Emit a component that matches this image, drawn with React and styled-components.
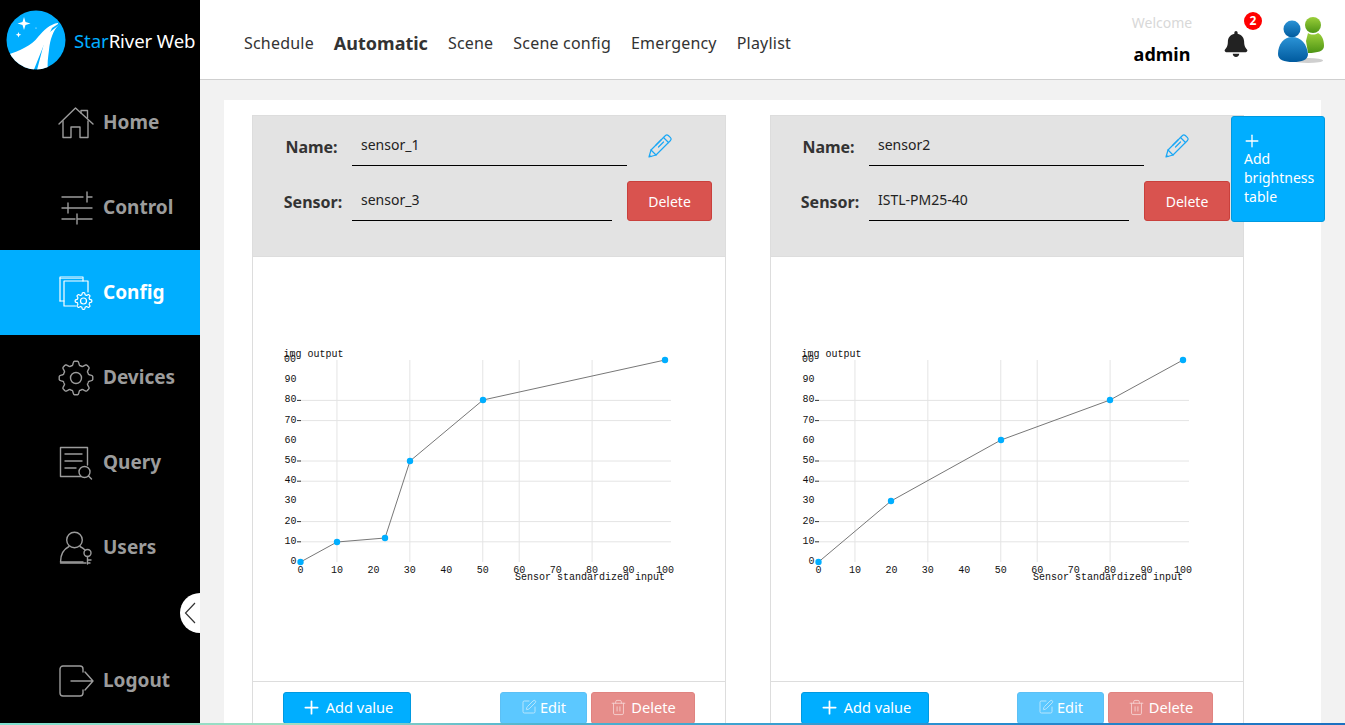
import React from "react";
import styled, { createGlobalStyle } from "styled-components";
import { Plus, SquarePen, Trash2 } from "lucide-react";
import { FaBell } from "react-icons/fa";

const FONT = `"Noto Sans", "Open Sans", Arial, sans-serif`;
const BLUE = "#00aeff";

const Global = createGlobalStyle`
  html, body { margin: 0; padding: 0; height: 100%; overflow: hidden; background: #f2f2f2; font-family: ${FONT}; }
  * { box-sizing: border-box; }
`;

const Page = styled.div`
  position: relative; width: 1345px; height: 725px; overflow: hidden;
  display: grid; grid-template-columns: 200px 1fr;
`;
const TaskEdge = styled.div`
  position: absolute; left: 0; right: 0; bottom: 0; height: 2px; z-index: 5;
  background: linear-gradient(90deg, #7fe0d0, #a0dcc0 22%, #4fb4d0 40%, #2a90d0 70%, #1c70c0 100%);
`;
const Sidebar = styled.aside`
  position: relative; background: #000; height: 723px; display: flex; flex-direction: column;
`;
const Brand = styled.div`
  height: 80px; display: flex; align-items: center; padding: 0 0 0 6px; flex: none;
`;
const BrandName = styled.div`
  margin-left: 8px; font-size: 18.6px; color: #fff; white-space: nowrap; letter-spacing: -0.1px;
  span { color: ${BLUE}; }
`;
const NavItem = styled.a`
  height: 85px; flex: none; display: flex; align-items: center; padding-left: 58px;
  background: ${(p) => (p.$active ? BLUE : "transparent")};
  color: ${(p) => (p.$active ? "#fff" : "#9c9c9c")};
  font-size: 19px; font-weight: 700;
  ${(p) => p.$bottom && "margin-top: auto;"}
`;
const NavLabel = styled.span`
  position: relative; top: -1px;
`;
const NavIcon = styled.span`
  width: 36px; height: 36px; margin-right: 9px; display: flex; align-items: center; justify-content: center; flex: none;
  svg { display: block; flex: none; }
`;
const Collapse = styled.div`
  position: absolute; right: 0; top: 593px; width: 20px; height: 40px; background: #fff;
  border-radius: 20px 0 0 20px; display: flex; align-items: center; justify-content: center;
`;
const Main = styled.main`
  display: flex; flex-direction: column; min-width: 0; height: 725px;
`;
const Header = styled.header`
  height: 80px; flex: none; background: #fff; border-bottom: 1px solid #cfcfcf;
  display: flex; align-items: center; padding: 0 19px 0 44px;
`;
const TopNav = styled.nav`
  display: flex; align-items: center; gap: 20px; padding-top: 7px;
`;
const TopLink = styled.a`
  font-size: ${(p) => (p.$active ? "18px" : "16px")};
  font-weight: ${(p) => (p.$active ? 700 : 400)};
  letter-spacing: ${(p) => (p.$active ? "0" : "0.2px")};
  color: #333; white-space: nowrap;
`;
const UserBox = styled.div`
  margin-left: auto; display: flex; align-items: center;
`;
const Welcome = styled.div`
  width: 64px; text-align: center; display: flex; flex-direction: column; align-items: center; gap: 9px; margin-right: 30px; padding-top: 1px;
`;
const WelcomeText = styled.div`
  font-size: 14px; line-height: 20px; color: #d8d8d8;
`;
const AdminName = styled.div`
  font-size: 18px; line-height: 25px; font-weight: 700; color: #000;
`;
const BellWrap = styled.div`
  position: relative; width: 24px; height: 30px; margin: 8px 30px 0 0; color: #222;
  svg { display: block; margin: 2px 0 0 -1px; }
`;
const Badge = styled.span`
  position: absolute; left: 20px; top: -17px; width: 18px; height: 18px; border-radius: 50%;
  background: #f00; color: #fff; font-size: 12px; font-weight: 700; line-height: 18px; text-align: center;
`;
const Content = styled.div`
  flex: 1; min-height: 0; padding: 20px 24px 0; overflow: hidden;
`;
const Panel = styled.div`
  position: relative; background: #fff; height: 100%; padding: 15px 28px 0;
  display: flex; gap: 44px; align-items: flex-start;
`;
const Card = styled.section`
  width: 474px; flex: none; height: 640px; border: 1px solid #ddd; background: #fff;
`;
const CardHead = styled.div`
  height: 141px; background: #e3e3e3; border-bottom: 1px solid #ddd; padding: 10px 0 0 ${(p) => p.$pad}px;
  display: flex; flex-direction: column; gap: 15px;
`;
const Row = styled.div`
  display: flex; align-items: center; height: 40px;
`;
const FieldLabel = styled.label`
  width: ${(p) => p.$w}px; margin-right: ${(p) => 69 - p.$w}px; flex: none; text-align: center;
  font-size: 16px; font-weight: 700; color: #333; white-space: nowrap; position: relative; top: 1px;
`;
const FieldInput = styled.input`
  width: ${(p) => p.$w}px; height: 40px; flex: none; border: 0; border-bottom: 1px solid #000; background: transparent; outline: none;
  font-family: ${FONT}; font-size: 14px; color: #222; padding: 0 0 3px 9px;
`;
const PenButton = styled.span`
  margin-left: 21px; margin-top: -2px; width: 25px; height: 25px; display: block;
`;
const DeleteBtn = styled.button`
  margin-left: 15px; width: ${(p) => p.$w}px; height: 40px; border: 1px solid #c9403c; border-radius: 3px;
  background: #d9534f; color: #fff; font-family: ${FONT}; font-size: 14px; padding: 0;
`;
const Plot = styled.div`
  height: 424px; display: block; svg { display: block; }
`;
const Foot = styled.div`
  border-top: 1px solid #ddd; display: flex; align-items: flex-start; padding: 10px 30px 0;
`;
const ActionBtn = styled.button`
  height: 32px; width: ${(p) => p.$w}px; margin-left: ${(p) => p.$ml || 0}px;
  border: 1px solid ${(p) => p.$border}; border-radius: 3px; background: ${(p) => p.$bg};
  color: #fff; font-family: ${FONT}; font-size: 14.6px; padding: 0 0 2px;
  display: inline-flex; align-items: center; justify-content: center; gap: ${(p) => p.$gap || 4}px;
`;
const AddTable = styled.button`
  position: absolute; left: 1007px; top: 16px; width: 94px; height: 106px; z-index: 2;
  background: ${BLUE}; border: 1px solid #0099e0; border-radius: 3px; color: #fff;
  font-family: ${FONT}; font-size: 14px; line-height: 19px; text-align: left; padding: 14px 0 0 12px;
  display: flex; flex-direction: column; align-items: flex-start; justify-content: flex-start;
  svg { display: block; margin: 0 0 -2px -2px; flex: none; }
`;

const S = { fill: "none", stroke: "#9c9c9c", strokeWidth: 1.4, strokeLinecap: "round", strokeLinejoin: "round" };
const W = { ...S, stroke: "#fff", strokeWidth: 1.2 };

/* closed gear outline: `teeth` rounded lobes around (cx, cy) */
const gearPath = (cx, cy, rOuter, rInner, teeth) => {
  const pts = [];
  const n = teeth * 16;
  for (let i = 0; i < n; i++) {
    const a = (i / n) * Math.PI * 2;
    const w = Math.max(-1, Math.min(1, Math.cos(a * teeth) * 1.9));
    const r = (rOuter + rInner) / 2 + ((rOuter - rInner) / 2) * w;
    pts.push(`${(cx + r * Math.cos(a)).toFixed(2)} ${(cy + r * Math.sin(a)).toFixed(2)}`);
  }
  return `M${pts.join("L")}Z`;
};

const HomeIcon = () => (
  <svg width="36" height="32" viewBox="0 0 36 32" {...S}>
    <path d="M1 17 17.500 1 35 17" />
    <path d="M23 6V3.500h6.500V11" />
    <path d="M5 14V30.500h8V20h9v10.500h8V14" />
  </svg>
);
const ControlIcon = () => (
  <svg width="33" height="34" viewBox="0 0 33 34" {...S}>
    <path d="M2 6h21M27 1v10M27 6h5M2 17h6M8 12v10M8 17h24M2 28h13M17 23v10M17 28h15" />
  </svg>
);
const ConfigIcon = () => (
  <svg width="34" height="34" viewBox="0 0 34 34" {...W}>
    <path d="M1 25V1H24V5" />
    <path d="M1 2.500H23" strokeOpacity=".6" />
    <path d="M1 25H5" />
    <path d="M16.500 30H5V5H29V16" />
    <path d={gearPath(24.5, 25, 8.3, 6.3, 8)} />
    <circle cx="24.500" cy="25" r="3" />
  </svg>
);
const DevicesIcon = () => (
  <svg width="36" height="36" viewBox="0 0 36 36" {...S}>
    <path d={gearPath(18, 18, 16.8, 13, 8)} />
    <circle cx="18" cy="18" r="5.500" />
  </svg>
);
const QueryIcon = () => (
  <svg width="34" height="34" viewBox="0 0 34 34" {...S}>
    <path d="M22 30.500H1.500V1.500h27V19" />
    <path d="M6 8h17M6 15h17M6 22h11" />
    <circle cx="25.500" cy="26" r="5.500" />
    <path d="M29.500 30l3 3" />
  </svg>
);
const UsersIcon = () => (
  <svg width="34" height="34" viewBox="0 0 34 34" {...S}>
    <circle cx="15.500" cy="9" r="7.800" />
    <path d="M10 15.500C5 18 1.500 23.500 1.500 31H24" />
    <path d="M1.500 32H27" />
    <path d="M21 15.500c2 1 3.500 2 5 3.500" />
    <circle cx="28.500" cy="22" r="3.500" />
    <path d="M28.500 25.500V33M28.500 29H32M28.500 32h2.500" />
  </svg>
);
const LogoutIcon = () => (
  <svg width="35" height="32" viewBox="0 0 35 32" {...S}>
    <path d="M24 7V4a3 3 0 0 0-3-3H4a3 3 0 0 0-3 3v24a3 3 0 0 0 3 3h17a3 3 0 0 0 3-3v-3" />
    <path d="M12 16h22M26 7l8 9-8 9" />
  </svg>
);

const Logo = () => (
  <svg width="60" height="60" viewBox="0 0 60 60">
    <defs><clipPath id="lg"><circle cx="30" cy="30" r="29.500" /></clipPath></defs>
    <circle cx="30" cy="30" r="29.500" fill={BLUE} />
    <g clipPath="url(#lg)" fill="#fff">
      <path d="M52 13C44 14 38 20 32 27 26 35 14 41 0 45V62H27L37 37 46 18 52 14Z" />
      <path d="M53 15C47 20 44 30 43 40 42 48 41 54 42 60H31L37 37 40 25Z" />
    </g>
    <path d="M18 7l1.500 5 5 1.500-5 1.500L18 20l-1.500-5-5-1.500 5-1.500z" fill="#fff" />
    <path d="M12.500 22l.8 2 2 .8-2 .8-.8 2-.8-2-2-.8 2-.8z" fill="#fff" />
    <circle cx="30" cy="18" r=".6" fill="#fff" />
  </svg>
);

const PenIcon = () => (
  <svg width="25" height="25" viewBox="0 0 25 25" fill="none" stroke="#1aa7f5" strokeWidth="1.2" strokeLinejoin="round" strokeLinecap="round">
    <path d="M1 24l2-7L17.500 2.500a2 2 0 0 1 2.800 0l2.200 2.200a2 2 0 0 1 0 2.800L8 22z" />
    <path d="M3 17l5 5M1.500 22.500l1.500 1" />
    <path d="M15.500 4.500l5 5M8 12l5-5M10.500 14l5-5" />
  </svg>
);

const Avatar = () => (
  <svg width="48" height="48" viewBox="0 0 48 48">
    <defs>
      <linearGradient id="av1" x1="0" y1="0" x2="0" y2="1"><stop offset="0" stopColor="#2b93d6" /><stop offset="1" stopColor="#005a9e" /></linearGradient>
      <linearGradient id="av2" x1="0" y1="0" x2="0" y2="1"><stop offset="0" stopColor="#9bcf3a" /><stop offset="1" stopColor="#4d9414" /></linearGradient>
    </defs>
    <ellipse cx="30" cy="44.500" rx="15" ry="2.500" fill="#cfcfcf" />
    <circle cx="35" cy="9" r="8" fill="url(#av2)" />
    <path d="M30 17C33 19 37 19 40 17 44 19 46 24 46 30 46 35 40 37 30 37L28 25Z" fill="url(#av2)" />
    <circle cx="14" cy="13" r="8.500" fill="url(#av1)" />
    <path d="M0 38C0 28 6 21 14 21 23 21 29 28 30 38 30 44 24 46 15 46 6 46 0 44 0 38Z" fill="url(#av1)" />
  </svg>
);

const xOf = (v) => 300.5 + v * 3.645;
const yOf = (v) => 562 - v * 2.02;
const Y_GRID = [80, 70, 50, 40, 20, 10];
const X_GRID = [10, 30, 50, 60, 80];
const AxisText = styled.text`
  font-family: "Liberation Mono", monospace; font-size: 10px; fill: #111;
`;

const Chart = ({ points }) => (
  <svg width="472" height="424" viewBox="253 257 472 424">
    {X_GRID.map((v) => (
      <line key={v} x1={xOf(v)} x2={xOf(v)} y1="360" y2="562" stroke="#e4e4e4" />
    ))}
    {Y_GRID.map((v) => (
      <g key={v}>
        <line x1="300" x2="671" y1={yOf(v)} y2={yOf(v)} stroke="#e4e4e4" />
        <line x1="297" x2="301" y1={yOf(v)} y2={yOf(v)} stroke="#333" />
      </g>
    ))}
    {[0, 10, 20, 30, 40, 50, 60, 70, 80, 90].map((v) => (
      <AxisText key={v} x="296.500" y={yOf(v) + 2} textAnchor="end">{v}</AxisText>
    ))}
    <AxisText x="284" y="362">00</AxisText>
    <AxisText x="283.500" y="356.500">img output</AxisText>
    {[0, 10, 20, 30, 40, 50, 60, 70, 80, 90, 100].map((v) => (
      <AxisText key={v} x={xOf(v)} y="572.500" textAnchor="middle">{v}</AxisText>
    ))}
    <AxisText x="515" y="580">Sensor standardized input</AxisText>
    <polyline points={points.map(([x, y]) => `${x},${y}`).join(" ")} fill="none" stroke="#777" strokeWidth="1" />
    {points.map(([x, y]) => (
      <circle key={x} cx={x} cy={y} r="3.200" fill={BLUE} />
    ))}
  </svg>
);

const TableCard = ({ name, sensor, points, pad, editGap, delWidth, headDelWidth }) => (
  <Card>
    <CardHead $pad={pad}>
      <Row>
        <FieldLabel $w={57}>Name:</FieldLabel>
        <FieldInput $w={275} readOnly value={name} />
        <PenButton><PenIcon /></PenButton>
      </Row>
      <Row>
        <FieldLabel $w={60}>Sensor:</FieldLabel>
        <FieldInput $w={260} readOnly value={sensor} />
        <DeleteBtn $w={headDelWidth}>Delete</DeleteBtn>
      </Row>
    </CardHead>
    <Plot><Chart points={points} /></Plot>
    <Foot>
      <ActionBtn $w={128} $bg={BLUE} $border="#0099e0" $gap={4}><Plus size={21} strokeWidth={2} />Add value</ActionBtn>
      <ActionBtn $w={87} $ml={editGap} $bg="#5cc8ff" $border="#5cc0f5" $gap={3}><SquarePen size={16} strokeWidth={1.3} color="#c5e9fb" />Edit</ActionBtn>
      <ActionBtn $w={delWidth} $ml={4} $bg="#e68d8a" $border="#e08380"><Trash2 size={17} strokeWidth={1.3} color="#f5d0cf" />Delete</ActionBtn>
    </Foot>
  </Card>
);

const NAV = [
  ["Home", <HomeIcon />],
  ["Control", <ControlIcon />],
  ["Config", <ConfigIcon />, true],
  ["Devices", <DevicesIcon />],
  ["Query", <QueryIcon />],
  ["Users", <UsersIcon />],
];

export default function App() {
  return (
    <Page>
      <Global />
      <Sidebar>
        <Brand>
          <Logo />
          <BrandName><span>Star</span>River Web</BrandName>
        </Brand>
        {NAV.map(([label, icon, active]) => (
          <NavItem key={label} $active={active}>
            <NavIcon>{icon}</NavIcon>
            <NavLabel>{label}</NavLabel>
          </NavItem>
        ))}
        <NavItem $bottom>
          <NavIcon><LogoutIcon /></NavIcon>
          <NavLabel>Logout</NavLabel>
        </NavItem>
        <Collapse>
          <svg width="12" height="22" viewBox="0 0 12 22" fill="none" stroke="#333" strokeWidth="1.200"><path d="M11 1 1.500 11 11 21" /></svg>
        </Collapse>
      </Sidebar>
      <Main>
        <Header>
          <TopNav>
            <TopLink>Schedule</TopLink>
            <TopLink $active>Automatic</TopLink>
            <TopLink>Scene</TopLink>
            <TopLink>Scene config</TopLink>
            <TopLink>Emergency</TopLink>
            <TopLink>Playlist</TopLink>
          </TopNav>
          <UserBox>
            <Welcome>
              <WelcomeText>Welcome</WelcomeText>
              <AdminName>admin</AdminName>
            </Welcome>
            <BellWrap>
              <FaBell size={26} />
              <Badge>2</Badge>
            </BellWrap>
            <Avatar />
          </UserBox>
        </Header>
        <Content>
          <Panel>
            <TableCard name="sensor_1" sensor="sensor_3" pad={30} editGap={89} delWidth={104} headDelWidth={85}
              points={[[300.5, 562], [337, 542], [385, 538], [410, 461], [483, 400], [665, 360]]} />
            <TableCard name="sensor2" sensor="ISTL-PM25-40" pad={29} editGap={88} delWidth={105} headDelWidth={86}
              points={[[300.5, 562], [373, 501], [483, 440], [592, 400], [665, 360]]} />
            <AddTable>
              <Plus size={20} strokeWidth={1.6} />
              <span>Add brightness table</span>
            </AddTable>
          </Panel>
        </Content>
      </Main>
      <TaskEdge />
    </Page>
  );
}
